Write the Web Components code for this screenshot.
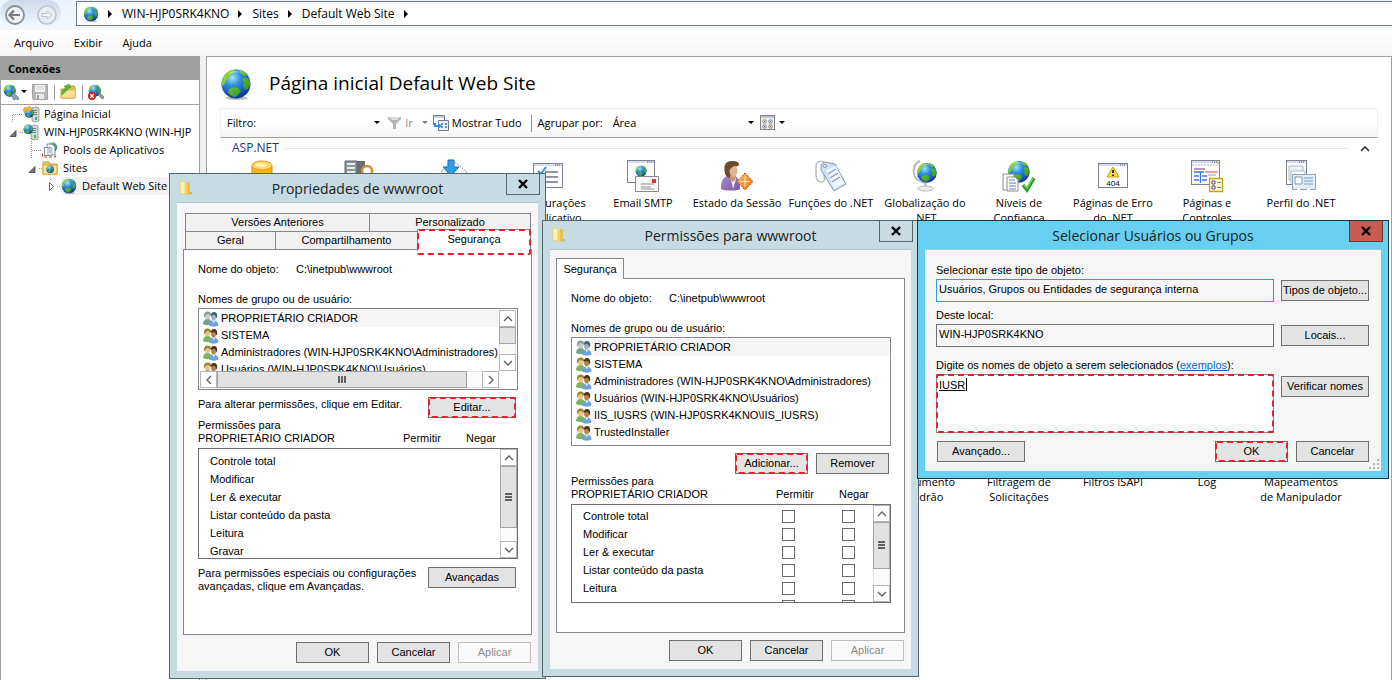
<!DOCTYPE html>
<html lang="pt-BR">
<head>
<meta charset="utf-8">
<title>Gerenciador do IIS</title>
<style>
  html, body { margin: 0; height: 100%; }
  body { overflow: hidden; background: #f0f0f0; color: #000; font: 11px/18px "Open Sans", "Noto Sans", sans-serif; }
</style>
</head>
<body>
<iis-desktop></iis-desktop>
<script>
/* Registers an element whose shadow root is built from a template function. */
function define(name, render) {
  customElements.define(name, class extends HTMLElement {
    connectedCallback() {
      if (this.shadowRoot) return;
      const t = document.createElement('template');
      t.innerHTML = render(this);
      this.attachShadow({ mode: 'open' }).append(t.content.cloneNode(true));
    }
  });
}
const attr = (el, n, d = '') => el.getAttribute(n) ?? d;

/* ---------- icons ---------- */
const GLOBE_DEFS = `<defs>
  <radialGradient id="sea" cx=".38" cy=".28" r=".8"><stop offset="0" stop-color="#9fe6ff"/><stop offset=".35" stop-color="#2f8fe0"/><stop offset=".8" stop-color="#1148b0"/><stop offset="1" stop-color="#0a2a78"/></radialGradient>
  <linearGradient id="land" x2="1" y2="1"><stop offset="0" stop-color="#a4e24a"/><stop offset="1" stop-color="#1f8a1c"/></linearGradient></defs>`;
const GLOBE = `<circle cx="16" cy="16" r="14.5" fill="url(#sea)"/>
  <path fill="url(#land)" d="M3 10C5 5 9 2 13 2l2 1-2 3-4 1v3l-3 3-1 3-3 2C1 16 2 13 3 10zM19 2c4 0 7 2 9 5l-4 1-3-2zM25 9l4 2c2 4 1 7-1 10l-3 1-2-4 1-4-2-2zM9 21l5-2 4 1 3 3-3 4-3 2c-3 0-6-3-7-5z"/>
  <path fill="#fff" opacity=".35" d="M8 6c4-4 10-4 14-1-4-1-9 0-14 1z"/>`;
const g = (x, y, s) => `<g transform="translate(${x} ${y}) scale(${s})">${GLOBE}</g>`;
const SERVER = `<path d="M1 1l4-1 3 1v13l-3 1-4-1z" fill="#d3d6d9" stroke="#80868c" stroke-width=".7"/><path d="M2 3.5h4M2 5.500h4M2 7.500h4" stroke="#6c737a" stroke-width=".9"/><path d="M4 10h2v3H4z" fill="#49bf3c"/>`;
const WINDOW = (w, h) => `<rect x=".5" y=".5" width="${w}" height="${h}" fill="#fff" stroke="#7c828e"/><path d="M1 2h${w - 1}" stroke="#d5dcec" stroke-width="2"/><path d="M${w - 7} 2h1m1 0h1m1 0h1" stroke="#46507a" stroke-width="1"/>`;
const USERS = (hairA, skinA, bodyA, hairB, skinB) => `
  <path d="M0 13c0-3 1.500-5 4.500-5S9 10 9 13c-2 1.500-7 1.500-9 0z" fill="${bodyA}"/>
  <ellipse cx="4.500" cy="4.800" rx="2.800" ry="3.400" fill="${skinA}"/>
  <path d="M1 7C.5 2.500 2 .5 4.700.5S8.500 2 8 5C7 4 6 3 5 3 3.500 3 2 4.500 1 7z" fill="${hairA}"/>
  <path d="M6 14.500c0-3.500 1.800-5 4.800-5s4.700 2 4.700 5c-2 1.500-7.500 1.500-9.500 0z" fill="#6fa2dd"/>
  <path d="M9.500 9.500h2.600l-1.300 3z" fill="#f4f8fd"/>
  <ellipse cx="10.600" cy="6" rx="2.500" ry="3.400" fill="${skinB}"/>
  <path d="M7.800 5c0-2.500 1-4 3.200-4s3.500 1.500 3.200 5l-1 1.500C13 5.500 12.500 4.500 11.500 4c-1.500 0-2.500 0-3.700 1z" fill="${hairB}"/>`;
const ICONS = {
  globe: [32, 32, GLOBE_DEFS + `<ellipse cx="17" cy="30" rx="11" ry="2" fill="#000" opacity=".25"/>` + GLOBE],
  connect: [16, 16, GLOBE_DEFS + g(0, 0, .42) + `<path d="M8 11l3-2 5 5-1 2-2-1-2 1z" fill="#8fa4b5" stroke="#5d7384" stroke-width=".7"/>`],
  disconnect: [16, 16, GLOBE_DEFS + g(0, 0, .42) + `<path d="M10 11l2-2 4 4-1 2-2-1z" fill="#8fa4b5" stroke="#5d7384" stroke-width=".7"/><circle cx="4" cy="12" r="4" fill="#d11f22"/><path d="M2.300 10.300l3.400 3.400m0-3.400l-3.400 3.400" stroke="#fff" stroke-width="1.300"/>`],
  save: [16, 16, `<path d="M.5.5h15v15H1.500l-1-1z" fill="#b9b9b9" stroke="#a2a2a2"/><path d="M3 1h10v7H3z" fill="#f2f2f2"/><path d="M4 3h8M4 5h8" stroke="#d0d0d0"/><path d="M4 10h8v5H4z" fill="#ececec"/><path d="M5 11h2v4H5z" fill="#a0a0a0"/>`],
  folderup: [16, 16, `<path d="M7 2h7l1 2v10H1V5h6z" fill="#e9b84c" stroke="#c99a36"/><path d="M2 6h13v8H1z" fill="#fbdf94" stroke="#d7ab4d" stroke-width=".7"/><path d="M2 11c0-4 1-6 4-7L4 2.500 9 0l2 4-2-.5C8 6 5 8 2 11z" fill="#52bd35" stroke="#2f8f20" stroke-width=".5"/>`],
  home: [16, 16, GLOBE_DEFS + `<g transform="translate(8 1)">${SERVER}</g>` + g(1, 2, .32) + `<path d="M0 4l2-3 2 1 2-2 3 2-1 3-4-1-3 2z" fill="#f7b52e" stroke="#cf861b" stroke-width=".5"/>`],
  server: [16, 16, GLOBE_DEFS + `<g transform="translate(7 1)">${SERVER}</g>` + g(0, 0, .33)],
  pools: [16, 16, GLOBE_DEFS + g(5, 0, .33) + `<path d="M5 2h5l3 3v8H5z" fill="#fff" stroke="#7b8794"/><path d="M2.500 5.500h6v8h-6z" fill="#f2f5f8" stroke="#8b95a0"/><path d="M6 6h4v7H6z" fill="#fff" stroke="#7b8794" stroke-width=".7"/><path d="M7 8h2M7 10h2" stroke="#5b88b8"/><path d="M.5 11.500v3.500h13v-3" fill="none" stroke="#c8402c" stroke-dasharray="3 2"/>`],
  sites: [16, 16, GLOBE_DEFS + `<path d="M1 2h6l1 2h7v10H1z" fill="#f0c866" stroke="#c69a3b"/><path d="M1 5h14v9H1z" fill="#fbe3a0" stroke="#d0a548"/>` + g(4, 5, .26)],
  funnel: [14, 14, `<path d="M0 1h13v2L8 8v5H5V8L0 3z" fill="#b5b5b5"/><path d="M1 1h11l-3 3H4z" fill="#dcdcdc"/>`],
  showall: [16, 16, `<path d="M.5 10V.5h11V5" fill="#fff" stroke="#747a86"/><path d="M1 2h10" stroke="#c3cde0" stroke-width="2"/><path d="M5.500 5.500h10v10h-10z" fill="#e9eef6" stroke="#747a86"/><path d="M8 9h2m2 0h2M8 12h2m2 0h2" stroke="#5668a0" stroke-width="1.500"/><path d="M1 8v4h4v2l4-3-4-3v2H3V8z" fill="#2c92dd"/>`],
  view: [16, 16, `<rect x=".5" y=".5" width="14" height="14" fill="#eee" stroke="#858585"/><path d="M1 2h13" stroke="#b9c2d6" stroke-width="2"/><path d="M3 5h3v3H3zM9 5h3v3H9zM3 10h3v3H3zM9 10h3v3H9z" fill="#fff" stroke="#777" stroke-width=".8"/><path d="M4 6h1v1H4z" fill="#72a32c"/><path d="M10 6h1v1h-1z" fill="#2f91d6"/><path d="M4 11h1v1H4z" fill="#553fc8"/><path d="M10 11h1v1h-1z" fill="#e9452b"/>`],
  down: [6, 4, `<path d="M0 0h6L3 3z"/>`],
  right: [6, 8, `<path d="M1 0l4 4-4 4z"/>`],
  chevup: [10, 7, `<path d="M1 6l4-4 4 4" fill="none" stroke="#333" stroke-width="1.600"/>`],
  back: [22, 22, `<circle cx="11" cy="11" r="9" fill="#eef0f2" stroke="#8b9096" stroke-width="1.800"/><path d="M6 11h10M10 6.500L5.500 11l4.500 4.500" fill="none" stroke="#777c82" stroke-width="2.200"/>`],
  forward: [22, 22, `<circle cx="11" cy="11" r="9" fill="#e9eef5" stroke="#bcc3cc" stroke-width="1.600"/><path d="M6 9.500h5V7l5 4-5 4v-2.500H6z" fill="#f4f7fa" stroke="#b6bec8"/>`],
  folder: [14, 16, `<path d="M1 1l5 1v12l-5-1z" fill="#fff1a8" stroke="#e4c65a" stroke-width=".6"/><path d="M6 4h4v10l-4 1z" fill="#f2d269"/><path d="M8 2h3v10l2 1-2 2-3-1z" fill="#e8c04d"/><path d="M11 13l2-1v2z" fill="#86a7c8"/>`],
  close: [10, 10, `<path d="M1 1l8 8M9 1L1 9" stroke="#000" stroke-width="2.400"/>`],
  users: [16, 16, USERS('#97862f', '#ecc08d', '#7fb35a', '#4a3324', '#b98150')],
  usersgray: [16, 16, USERS('#8b9997', '#c6cfcc', '#74a58c', '#41617a', '#9bb3c4')],
  database: [32, 32, `<path d="M1 6v20c0 3 20 3 20 0V6z" fill="#f9b31b" stroke="#d88b0c"/><ellipse cx="11" cy="5.500" rx="10" ry="4.500" fill="#ffd968" stroke="#e59a12"/><ellipse cx="10" cy="5" rx="6" ry="2" fill="#fff1b5"/>`],
  machine: [32, 32, `<path d="M0 1h12v28H0z" fill="#8f969c" stroke="#5e6469"/><path d="M2 4h8M2 8h8M2 12h8" stroke="#e6eaed" stroke-width="2"/><path d="M12 1h8v28h-8z" fill="#676d73"/><circle cx="22" cy="11" r="5" fill="#fff" stroke="#d48a32" stroke-width="2.500"/>`],
  compile: [32, 32, `<path d="M2 12l9-10 6 1 11 9-12 14z" fill="#fff" stroke="#8b8f97" stroke-dasharray="2 1"/><path d="M9 0h6v7h5l-8 9-8-9h5z" fill="#2f9fe6" stroke="#1971b4"/>`],
  settings: [32, 32, `<g transform="translate(0 3)">${WINDOW(29, 24)}<path d="M12 9h13M12 14h13M12 19h13" stroke="#707388" stroke-width="1.500"/><path d="M5 8l3 3 5-7" fill="none" stroke="#2c9ad0" stroke-width="2"/></g>`],
  smtp: [32, 32, GLOBE_DEFS + WINDOW(27, 22) + g(8, 5, .38) + `<path d="M8.500 16.500h23v15h-23z" fill="#f8f8f8" stroke="#8a8a8a"/><path d="M14 24h13M14 27h10M14 29h13" stroke="#8d9199"/><path d="M25 19h4v4h-4z" fill="#e8303a"/>`],
  session: [32, 32, `<defs><linearGradient id="robe" x2="1" y2="1"><stop offset="0" stop-color="#a98bcf"/><stop offset="1" stop-color="#77599f"/></linearGradient><linearGradient id="gem" x2="1" y2="1"><stop offset="0" stop-color="#ffc062"/><stop offset="1" stop-color="#ee6d12"/></linearGradient></defs>
    <path d="M0 29c0-7 1-11 6-13h8c4 2 5 6 5 13-4 2-15 2-19 0z" fill="url(#robe)"/><path d="M10 19l2 10 3-10-2-3z" fill="#f4f4f4"/>
    <path d="M4 14C2 4 5 1 11 1c5 0 7 1 7 4l-5 3-4 10c-2 0-4-2-5-4z" fill="#6d4c30"/><path d="M9 16h5v4l-2 2-3-3z" fill="#c99572"/><ellipse cx="12.500" cy="11" rx="4" ry="6" fill="#dfb593"/><path d="M7 12C6 3 13 1 18 4c0 2-3 2-5 2-2 1-4 3-6 6z" fill="#6d4c30"/>
    <path d="M24 13l8 8.500-8 8.500-8-8.500z" fill="url(#gem)" stroke="#b9500e" stroke-dasharray="2 1"/><path d="M24 16v11M19 21.500h10" stroke="#ffe0b0" stroke-width="1.200"/>`],
  functions: [32, 32, `<path d="M11 4C7 0 1 0 1 7s-1 15 5 15c4 0 4-3 3-7" fill="none" stroke="#b5bac2" stroke-width="1.400"/><path d="M6 5l4-3 10 2 11 20-12 7L6 10z" fill="#cfe2f3" stroke="#8298ad" stroke-width="1"/><path d="M11 10l10-4 8 17-10 6z" fill="#eef6fc"/><circle cx="10" cy="6" r="1.500" fill="#fff" stroke="#7c97b2"/><path d="M13 14l8-5M15 18l8-5M17 22l8-5" stroke="#8f9ac0" stroke-width="1.300"/>`],
  globalization: [32, 32, GLOBE_DEFS + `<path d="M11 1C3 4 3 16 9 20c3 2 6 3 8 3" fill="none" stroke="#b4bac0" stroke-width="2"/>` + g(7, 2, .68) + `<path d="M15 23h3v4h-3z" fill="#c8ccd0"/><ellipse cx="16.500" cy="28.500" rx="8" ry="2.500" fill="#e9ebed" stroke="#b6babf"/>`],
  trust: [32, 32, GLOBE_DEFS + g(4, 0, .74) + `<path d="M0 14h11v16H0z" fill="#fff" stroke="#8c8c8c"/><path d="M4 17h8l3 3v11H4z" fill="#fff" stroke="#8c8c8c"/><path d="M6 20h6M6 23h7M6 26h7M6 29h7" stroke="#4584c0"/><path d="M20 25l4 5 7-12" fill="none" stroke="#2f9e2a" stroke-width="3.500"/><path d="M21 25l3 3 6-10" fill="none" stroke="#7ada5c" stroke-width="1.200"/>`],
  errorpages: [32, 32, `<g transform="translate(1 3)">${WINDOW(29, 24)}<path d="M15 4l6 10H9z" fill="#ffd83c" stroke="#caa013" stroke-linejoin="round"/><path d="M15 7v3m0 1.500v1.500" stroke="#000" stroke-width="1.500"/><text x="15" y="23" font-family="Open Sans" font-size="8" text-anchor="middle">404</text></g>`],
  pages: [32, 32, `${WINDOW(28, 24)}<path d="M1 5h28" stroke="#aeb4bf" stroke-width="1" stroke-dasharray="2 1"/><path d="M26 2h2v2h-2z" fill="#f5c326"/><path d="M3 9h11" stroke="#7d2f4a"/><path d="M14 12h13" stroke="#e33f3f"/><path d="M3 12h10M3 16h5m3 0h5M3 20h5m3 0h5M9.500 12v11" stroke="#3f74d8" stroke-width="1.300"/><path d="M17 15h8" stroke="#999"/><path d="M18.500 18.500h13v13h-13z" fill="#fff6c8" stroke="#c7a41b" stroke-width="1.300"/><path d="M21 21h3v3h-3zM21 26h3v3h-3z" fill="#fff" stroke="#64407a"/><path d="M26 22.500h4M26 27.500h4" stroke="#4a8ac0"/>`],
  profile: [32, 32, `<g transform="translate(1 0)">${WINDOW(20, 24)}<path d="M3 6h14v14H3z" fill="#eef1f4" stroke="#b2b6bc"/><path d="M5 11h14v12H5z" fill="#fff" stroke="#b2b6bc"/><path d="M6.500 14.500h23v15h-23z" fill="#e3edf7" stroke="#8fa2b8"/><path d="M9 17h7v7H9z" fill="#fff" stroke="#7c97b2"/><path d="M18 18h9M18 21h9M18 24h9" stroke="#6f9cc8"/><path d="M11 29.500h3m7 0h3" stroke="#fff" stroke-width="2"/></g>`],
};
define('ui-icon', el => {
  const [w, h, body] = ICONS[attr(el, 'name')];
  const s = +attr(el, 'size', w);
  return `<style>:host{display:block;flex:none;line-height:0}svg{display:block;overflow:visible}</style>
    <svg width="${s}" height="${s * h / w}" viewBox="0 0 ${w} ${h}" aria-hidden="true">${body}</svg>`;
});

/* ---------- small shared parts ---------- */
define('mark-frame', () => `<style>
  :host{position:absolute;inset:0;pointer-events:none}
  svg{display:block;width:100%;height:100%}
  rect{x:1px;y:1px;width:calc(100% - 2px);height:calc(100% - 2px);fill:none;stroke:#e8202a;stroke-width:2;stroke-dasharray:6 4}
  </style><svg aria-hidden="true"><rect rx="1"/></svg>`);

define('win-button', el => `<style>
  :host{display:block;position:relative;width:73px;flex:none}
  :host([wide]){width:88px}
  button{width:100%;height:21px;padding:0;border:1px solid #707070;background:#e3e3e3;color:#000;font:inherit;line-height:19px;white-space:nowrap}
  button:disabled{border-color:#b9c0bf;background:#f9f9f9;color:#8b8b8b}
  </style><button type="button" ${el.hasAttribute('disabled') ? 'disabled' : ''}><slot></slot></button>${el.hasAttribute('marked') ? '<mark-frame></mark-frame>' : ''}`);

define('scroll-bar', el => {
  const horiz = el.hasAttribute('horizontal'), grip = el.hasAttribute('grip');
  return `<style>
  :host{display:flex;flex-direction:${horiz ? 'row' : 'column'};flex:none;${horiz ? 'height' : 'width'}:17px;background:#fbfbfb;box-sizing:border-box}
  div{box-sizing:border-box;border:1px solid #b6b6b6;display:grid;place-items:center}
  .end{flex:0 0 17px;background:#fff}
  .thumb{flex:0 0 ${attr(el, 'thumb')}px;background:#e2e2e2;border-color:#a3a3a3}
  .track{flex:1;border-${horiz ? 'block' : 'inline'}-color:#e4e4e4;border-${horiz ? 'inline' : 'block'}-width:0}
  path{fill:none;stroke:#606060;stroke-width:1.3}
  .g path{stroke-width:2}
  svg{display:block}
  </style>
  <div class="end"><svg width="10" height="10"><path d="${horiz ? 'M7 1L3 5l4 4' : 'M1 7l4-4 4 4'}"/></svg></div>
  <div class="thumb">${grip ? `<svg class="g" width="9" height="9"><path d="${horiz ? 'M1 1v7M4 1v7M7 1v7' : 'M1 1h7M1 4h7M1 7h7'}"/></svg>` : ''}</div>
  <div class="track"></div>
  <div class="end"><svg width="10" height="10"><path d="${horiz ? 'M3 1l4 4-4 4' : 'M1 3l4 4 4-4'}"/></svg></div>`;
});

/* ---------- main window ---------- */
define('address-bar', () => `<style>
  :host{display:flex;height:30px;background:linear-gradient(#eaf3fd,#f3f8fe);align-items:flex-start}
  .nav{display:flex;gap:10px;width:61px;height:26px;box-sizing:border-box;padding:3px 0 0 4px;margin-right:15px;border-radius:13px;background:linear-gradient(#cdd9ea,#e9f0f9 80%,transparent)}
  button{border:0;padding:0;background:none;font:inherit;color:inherit;display:block}
  ol{flex:1;display:flex;align-items:center;height:23px;margin:1px 0 0;padding:0 0 0 6px;list-style:none;background:#fff;border:1px solid #747c86;border-right:0}
  li{display:flex;align-items:center;gap:8px;margin-right:9px;font-size:12px}
  </style>
  <div class="nav"><button aria-label="Voltar"><ui-icon name="back" size="22"></ui-icon></button><button aria-label="Avançar"><ui-icon name="forward" size="22"></ui-icon></button></div>
  <ol><li><ui-icon name="globe" size="16"></ui-icon><ui-icon name="right"></ui-icon></li>
  <li><button>WIN-HJP0SRK4KNO</button><ui-icon name="right"></ui-icon></li>
  <li><button>Sites</button><ui-icon name="right"></ui-icon></li>
  <li><button>Default Web Site</button><ui-icon name="right"></ui-icon></li></ol>`);

define('menu-bar', () => `<style>
  :host{display:flex;gap:20px;align-items:center;height:26px;padding-left:14px;background:linear-gradient(#fff,#f5f5f5)}
  button{border:0;padding:0;background:none;font:inherit;color:inherit}
  </style><button>Arquivo</button><button>Exibir</button><button>Ajuda</button>`);

define('tree-item', el => {
  const art = {
    first: '<path class="d" d="M4.500 17V9.500H15"/>',
    open: '<path d="M2 13.500h6v-6z" fill="#777" stroke="#333" stroke-width=".7"/><path class="d" d="M12 9.500h3"/>',
    leaf: '<path class="d" d="M4.500 0v18M5 9.500h10"/>',
    closed: '<path d="M3.500 5.500v8l4-4z" fill="#fff" stroke="#666"/><path class="d" d="M4.500 0v3M11 9.500h4"/>',
  }[attr(el, 'twisty')];
  return `<style>
  :host{display:flex;align-items:center;height:18px;padding-left:${7 + 19 * +attr(el, 'level', 0)}px;white-space:nowrap}
  .d{fill:none;stroke:#999;stroke-dasharray:1 1}
  svg{flex:none;display:block}
  span{display:flex;align-items:center;gap:5px;flex:1}
  :host([selected]) span{background:#f2f2f2}
  </style><svg width="15" height="18" aria-hidden="true">${art}</svg><span><ui-icon name="${attr(el, 'icon')}" size="16"></ui-icon><slot></slot></span>`;
});

define('connections-pane', () => `<style>
  :host{display:flex;flex-direction:column;width:200px;flex:none;box-sizing:border-box;background:#fff;border:1px solid #a0a0a0;border-width:1px 1px 0;overflow:hidden}
  h2{margin:0;height:23px;padding-left:7px;background:#a0a0a0;font:700 11px/24px "Open Sans",sans-serif}
  .tools{display:flex;align-items:center;height:24px;padding-left:2px;border-bottom:1px solid #a0a0a0}
  button{display:flex;align-items:center;gap:2px;border:0;padding:0;background:none;margin:0 6px 0 5px}
  button:first-child{margin:0}
  i{width:1px;height:15px;background:#9a9a9a}
  </style>
  <h2>Conexões</h2>
  <div class="tools"><button aria-label="Conectar"><ui-icon name="connect" size="16"></ui-icon><ui-icon name="down"></ui-icon></button>
    <button aria-label="Salvar"><ui-icon name="save" size="16"></ui-icon></button><i></i>
    <button aria-label="Acima"><ui-icon name="folderup" size="16"></ui-icon></button><i></i>
    <button aria-label="Desconectar"><ui-icon name="disconnect" size="16"></ui-icon></button></div>
  <div class="tree">
    <tree-item icon="home" twisty="first">Página Inicial</tree-item>
    <tree-item icon="server" twisty="open">WIN-HJP0SRK4KNO (WIN-HJP</tree-item>
    <tree-item icon="pools" twisty="leaf" level="1">Pools de Aplicativos</tree-item>
    <tree-item icon="sites" twisty="open" level="1">Sites</tree-item>
    <tree-item icon="globe" twisty="closed" level="2" selected>Default Web Site</tree-item>
  </div>`);

define('filter-bar', () => `<style>
  :host{display:flex;align-items:center;height:28px;padding-left:6px;border:1px solid #f0f0f0;border-bottom-color:#a0a0a0;background:linear-gradient(#fff 50%,#f4f4f4);white-space:nowrap}
  input,select{appearance:none;border:0;padding:0;margin:0;background:none;font:inherit;color:inherit;min-width:0;outline:0}
  input{width:100px}
  select{width:132px}
  label{display:flex;align-items:center;gap:9px;margin-right:8px}
  .by{gap:10px}
  button{display:flex;align-items:center;gap:3px;border:0;padding:0;background:none;font:inherit;color:inherit}
  button:disabled{color:#8b8b8b}
  i{width:1px;height:17px;background:#8f8f8f;margin:0 6px 0 9px}
  .muted{opacity:.5;margin:0 5px 0 9px}
  .drop{margin:0 3px 0 -5px}
  </style>
  <label>Filtro: <input type="text"><ui-icon name="down"></ui-icon></label>
  <button disabled><ui-icon name="funnel"></ui-icon>Ir</button><ui-icon class="muted" name="down"></ui-icon>
  <button><ui-icon name="showall" size="16"></ui-icon>Mostrar Tudo</button><i></i>
  <label class="by">Agrupar por: <select><option>Área</option></select></label>
  <button aria-label="Exibição"><ui-icon class="drop" name="down"></ui-icon><ui-icon name="view" size="16"></ui-icon><ui-icon name="down"></ui-icon></button>`);

define('feature-item', el => `<style>
  :host{display:flex;flex-direction:column;align-items:center;gap:3px;text-align:center;line-height:15px}
  .pic{height:32px;width:32px}
  </style><div class="pic">${attr(el, 'icon') ? `<ui-icon name="${attr(el, 'icon')}"></ui-icon>` : ''}</div><span><slot></slot></span>`);

define('feature-group', el => `<style>
  :host{display:block;padding-top:1px}
  header{display:flex;align-items:center;gap:5px;height:18px;padding:0 8px 0 12px;color:#1e3287;font-size:12px}
  hr{flex:1;border:0;border-top:1px solid #dfe9f2;margin:0 8px 0 0}
  .grid{display:grid;grid-template-columns:repeat(auto-fill,94px);padding-top:3px}
  </style><header>${attr(el, 'label')}<hr><ui-icon name="chevup"></ui-icon></header><div class="grid"><slot></slot></div>`);

define('home-panel', () => `<style>
  :host{display:block;flex:1;min-width:0;margin-left:6px;padding:0 13px;background:#fff;border:1px solid #a0a0a0;border-bottom:0;overflow:hidden}
  h1{display:flex;align-items:center;gap:17px;height:51px;margin:0;font:400 19px/26px "Open Sans",sans-serif}
  ui-icon.big{margin-top:3px}
  feature-group:last-of-type feature-item:first-of-type{grid-column-start:8}
  .gap{height:192px}
  </style>
  <h1><ui-icon class="big" name="globe" size="32"></ui-icon>Página inicial Default Web Site</h1>
  <filter-bar></filter-bar>
  <feature-group label="ASP.NET">
    <feature-item icon="database"></feature-item>
    <feature-item icon="machine"></feature-item>
    <feature-item icon="compile"></feature-item>
    <feature-item icon="settings">Configurações<br>de Aplicativo</feature-item>
    <feature-item icon="smtp">Email SMTP</feature-item>
    <feature-item icon="session">Estado da Sessão</feature-item>
    <feature-item icon="functions">Funções do .NET</feature-item>
    <feature-item icon="globalization">Globalização do<br>.NET</feature-item>
    <feature-item icon="trust">Níveis de<br>Confiança</feature-item>
    <feature-item icon="errorpages">Páginas de Erro<br>do .NET</feature-item>
    <feature-item icon="pages">Páginas e<br>Controles</feature-item>
    <feature-item icon="profile">Perfil do .NET</feature-item>
  </feature-group>
  <div class="gap"></div>
  <feature-group label="">
    <feature-item>Documento<br>Padrão</feature-item>
    <feature-item>Filtragem de<br>Solicitações</feature-item>
    <feature-item>Filtros ISAPI</feature-item>
    <feature-item>Log</feature-item>
    <feature-item>Mapeamentos<br>de Manipulador</feature-item>
  </feature-group>`);

/* ---------- dialogs ---------- */
define('win-dialog', el => `<style>
  :host{display:block;box-sizing:border-box;border:1px solid #56666f;background:#c7dbe2;padding:0 7px 7px}
  :host([active]){background:#67d0f1;border-color:#22333f}
  header{display:flex;align-items:flex-start;justify-content:space-between;height:29px;position:relative}
  h2{margin:0;position:absolute;inset:0;text-align:center;font:400 14px/29px "Open Sans",sans-serif;color:#1c1c1c}
  .ico{margin:6px 0 0 2px}
  button{position:relative;margin:0 -2px 0 auto;width:34px;height:21px;padding:0;border:1px solid #56666f;border-top:0;background:transparent;display:grid;place-items:center}
  :host([active]) button{background:#c75c54;border-color:#6c3330}
  section{background:#f6f6f6;border-top:1px solid #b3c5cc;margin-top:-1px}
  </style>
  <header>${attr(el, 'icon') ? `<ui-icon class="ico" name="${attr(el, 'icon')}"></ui-icon>` : ''}<h2>${attr(el, 'heading')}</h2><button type="button" aria-label="Fechar"><ui-icon name="close"></ui-icon></button></header>
  <section><slot></slot></section>`);

/* Slotted dialog content inherits from its own tree, so the dialog text font is set by each dialog element. */
const DIALOG_FONT = ':host{display:block;font:11px/14px "Liberation Sans",Arial,sans-serif}';

define('user-list', el => {
  const names = attr(el, 'names').split('|');
  return `<style>
  :host{display:grid;grid-template:minmax(0,1fr) auto/1fr auto;box-sizing:border-box;border:1px solid #828790;background:#fff;padding:1px}
  ul{margin:0;padding:0 0 0 3px;list-style:none;overflow:hidden;min-height:0}
  li{display:flex;align-items:center;gap:2px;height:17px;white-space:nowrap}
  li span{flex:1;line-height:17px}
  li:first-child span{background:#f5f5f5}
  </style><ul>${names.map((n, i) => `<li><ui-icon name="${i ? 'users' : 'usersgray'}" size="16"></ui-icon><span>${n}</span></li>`).join('')}</ul>
  ${el.hasAttribute('scroll') ? '<scroll-bar thumb="17"></scroll-bar><scroll-bar horizontal grip thumb="250"></scroll-bar>' : ''}`;
});

define('permission-list', el => {
  const checks = el.hasAttribute('checks');
  const rows = attr(el, 'rows').split('|');
  const box = (r, c) => checks ? `<input type="checkbox" aria-label="${c}: ${r || 'Gravar'}">` : '';
  return `<style>
  :host{display:block}
  .head{display:grid;grid-template-columns:205px 63px auto;line-height:13px;align-items:end;margin-bottom:3px}
  .box{display:flex;box-sizing:border-box;height:${attr(el, 'height')}px;border:1px solid #6c6f76;background:#fff}
  .view{flex:1;overflow:hidden;padding-top:${checks ? 2 : 3}px}
  table{border-collapse:collapse;width:100%;table-layout:fixed}
  tr{height:18px}
  th,td{padding:0;height:18px;font-weight:400;text-align:left;vertical-align:middle}
  th{padding-left:11px;width:199px}
  td{width:60px}
  td:last-child{width:auto}
  input{appearance:none;display:block;width:13px;height:13px;margin:0;border:1px solid #6a6a6a;background:#fff}
  </style>
  <div class="head"><span>Permissões para<br>PROPRIETÁRIO CRIADOR</span><span>Permitir</span><span>Negar</span></div>
  <div class="box"><div class="view"><table>${rows.map(r => `<tr><th scope="row">${r}</th><td>${box(r, 'Permitir')}</td><td>${box(r, 'Negar')}</td></tr>`).join('')}</table></div>
  <scroll-bar grip thumb="${attr(el, 'thumb')}"></scroll-bar></div>`;
});

define('object-info', () => `<style>
  :host{display:block;padding-top:12px}
  div{display:grid;grid-template-columns:98px auto;margin-bottom:16px}
  p{margin:0 0 2px}
  </style><div><span>Nome do objeto:</span><span>C:\\inetpub\\wwwroot</span></div><p>Nomes de grupo ou de usuário:</p>`);

define('tab-panel', () => `<style>
  :host{display:block;margin:0 6px;padding:0 13px 0 14px;border:1px solid #828790;background:#fff}
  </style><slot></slot>`);

define('dialog-buttons', () => `<style>
  :host{display:flex;justify-content:flex-end;gap:8px;padding:7px 7px 8px}
  </style><win-button>OK</win-button><win-button>Cancelar</win-button><win-button disabled>Aplicar</win-button>`);

define('properties-dialog', () => `<style>
  ${DIALOG_FONT}
  .tabs{display:grid;margin:0 8px;padding-top:10px}
  .row{display:grid;height:18px}
  .row.a{grid-template-columns:184px 1fr}
  .row.b{grid-template-columns:90px 142px 1fr}
  .row button{border:1px solid #828790;border-bottom:0;background:#f1f1f1;padding:0;font:inherit;line-height:17px;margin-right:-1px;color:inherit;min-width:0}
  .row .on{position:relative;z-index:1;margin:-2px -1px -2px 0;height:22px;padding-bottom:3px;background:#fff;border-color:#828790}
  .on mark-frame{inset:-1px -1px -4px}
  .line{display:flex;justify-content:space-between;align-items:flex-start;padding-right:2px}
  .edit{margin:7px 0 1px}
  .adv{margin-top:8px;line-height:13px;padding-bottom:41px}
  user-list{height:82px}
  </style>
  <win-dialog heading="Propriedades de wwwroot" icon="folder">
    <div class="tabs"><div class="row a"><button>Versões Anteriores</button><button>Personalizado</button></div>
    <div class="row b"><button>Geral</button><button>Compartilhamento</button><button class="on">Segurança<mark-frame></mark-frame></button></div></div>
    <tab-panel>
      <object-info></object-info>
      <user-list scroll names="PROPRIETÁRIO CRIADOR|SISTEMA|Administradores (WIN-HJP0SRK4KNO\\Administradores)|Usuários (WIN-HJP0SRK4KNO\\Usuários)"></user-list>
      <div class="line edit"><span>Para alterar permissões, clique em Editar.</span><win-button wide marked>Editar...</win-button></div>
      <permission-list height="111" thumb="62" rows="Controle total|Modificar|Ler &amp;amp; executar|Listar conteúdo da pasta|Leitura|Gravar"></permission-list>
      <div class="line adv"><span>Para permissões especiais ou configurações<br>avançadas, clique em Avançadas.</span><win-button wide>Avançadas</win-button></div>
    </tab-panel>
    <dialog-buttons></dialog-buttons>
  </win-dialog>`);

define('permissions-dialog', () => `<style>
  ${DIALOG_FONT}
  .tabs{padding:8px 6px 0}
  .tabs button{display:block;position:relative;z-index:1;width:68px;height:21px;margin-bottom:-1px;padding:0;border:1px solid #828790;border-bottom:0;background:#fff;font:inherit;color:inherit}
  user-list{height:109px}
  .act{display:flex;justify-content:flex-end;gap:8px;padding:7px 2px 1px}
  permission-list{padding-bottom:29px}
  </style>
  <win-dialog heading="Permissões para wwwroot" icon="folder">
    <div class="tabs"><button>Segurança</button></div>
    <tab-panel>
      <object-info></object-info>
      <user-list names="PROPRIETÁRIO CRIADOR|SISTEMA|Administradores (WIN-HJP0SRK4KNO\\Administradores)|Usuários (WIN-HJP0SRK4KNO\\Usuários)|IIS_IUSRS (WIN-HJP0SRK4KNO\\IIS_IUSRS)|TrustedInstaller"></user-list>
      <div class="act"><win-button marked>Adicionar...</win-button><win-button>Remover</win-button></div>
      <permission-list checks height="99" thumb="47" rows="Controle total|Modificar|Ler &amp;amp; executar|Listar conteúdo da pasta|Leitura|"></permission-list>
    </tab-panel>
    <dialog-buttons></dialog-buttons>
  </win-dialog>`);

define('select-dialog', () => `<style>
  ${DIALOG_FONT}
  form{display:grid;grid-template-columns:1fr 88px;column-gap:7px;row-gap:6px;padding:13px 12px 9px 11px;position:relative}
  label{display:block;margin-bottom:2px}
  input,textarea{display:block;box-sizing:border-box;width:100%;border:1px solid #707070;border-radius:0;margin:0;font:inherit;line-height:14px;color:#000;background:#f6f6f6;outline:0}
  input{height:23px;padding:0 2px 3px}
  input.focus{border-color:#2ba0d8}
  textarea{height:59px;padding:3px 2px;resize:none;background:#fff;text-decoration:underline;border-color:#8a8a8a}
  win-button{align-self:end;margin-bottom:1px}
  win-button.top{align-self:start;margin:23px 0 0}
  .third{padding-top:5px}
  .area{position:relative}
  .caret{position:absolute;left:30px;top:4px;width:1px;height:13px;background:#000}
  a{color:#0a66cc}
  .foot{grid-column:1/-1;display:flex;gap:8px;padding:2px 0 0 1px}
  .foot win-button{margin:0}
  .foot .ok{margin-left:auto}
  .grip{position:absolute;right:1px;bottom:1px}
  </style>
  <win-dialog active heading="Selecionar Usuários ou Grupos">
    <form>
      <div><label for="type">Selecionar este tipo de objeto:</label><input id="type" class="focus" readonly value="Usuários, Grupos ou Entidades de segurança interna"></div><win-button wide>Tipos de objeto...</win-button>
      <div><label for="place">Deste local:</label><input id="place" readonly value="WIN-HJP0SRK4KNO"></div><win-button wide>Locais...</win-button>
      <div class="third"><label for="names">Digite os nomes de objeto a serem selecionados (<a href="#exemplos">exemplos</a>):</label>
        <div class="area"><textarea id="names" spellcheck="false">IUSR</textarea><span class="caret"></span><mark-frame></mark-frame></div></div><win-button wide class="top">Verificar nomes</win-button>
      <div class="foot"><win-button wide>Avançado...</win-button><win-button class="ok" marked>OK</win-button><win-button>Cancelar</win-button></div>
      <svg class="grip" width="11" height="11" aria-hidden="true"><path fill="#b5b5b5" d="M8 0h2v2H8zM8 4h2v2H8zM4 4h2v2H4zM8 8h2v2H8zM4 8h2v2H4zM0 8h2v2H0z"/></svg>
    </form>
  </win-dialog>`);

/* ---------- desktop ---------- */
define('iis-desktop', () => `<style>
  :host{display:flex;flex-direction:column;min-height:100vh;height:100%;position:relative;background:#f0f0f0}
  main{flex:1;display:flex;min-height:0}
  .window{position:absolute}
  .props{left:169px;top:173px;width:377px}
  .perms{left:542px;top:220px;width:377px}
  .select{left:917px;top:220px;width:472px}
  </style>
  <address-bar></address-bar><menu-bar></menu-bar>
  <main><connections-pane></connections-pane><home-panel></home-panel></main>
  <properties-dialog class="window props"></properties-dialog>
  <permissions-dialog class="window perms"></permissions-dialog>
  <select-dialog class="window select"></select-dialog>`);
</script>
</body>
</html>
